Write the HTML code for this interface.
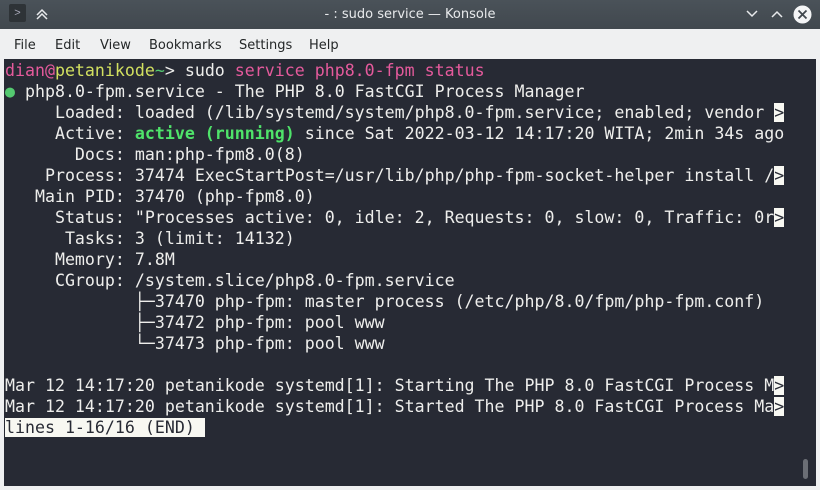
<!DOCTYPE html>
<html><head><meta charset="utf-8"><style>
html,body{margin:0;padding:0;width:820px;height:490px;overflow:hidden;background:#eff0f1;font-family:"Liberation Sans","DejaVu Sans",sans-serif;}
.title{position:absolute;left:0;top:0;width:820px;height:29px;background:linear-gradient(#4a5259,#41484e);color:#e8eaec;}
.title .t{position:absolute;left:0;right:0;top:7px;text-align:center;font-size:13px;font-family:"DejaVu Sans",sans-serif;}
.menu{position:absolute;top:29px;left:0;width:820px;height:30px;font-size:13px;font-family:"DejaVu Sans",sans-serif;color:#232627;}
.menu span{position:absolute;top:9px;}
.term{position:absolute;left:4px;top:59px;width:812px;height:427px;background:#272a34;}
pre{position:absolute;left:5px;top:60px;margin:0;font-family:"DejaVu Sans Mono",monospace;font-size:16.6px;line-height:21px;color:#eeeeec;}
.p{color:#e55a9c}.y{color:#d2e060}.g{color:#4fe36a;font-weight:bold}.gr{color:#54c970}
.r{background:#f8f8f2;color:#272a34}
</style></head><body>
<div class="title">
<div style="position:absolute;left:9px;top:4px;width:17px;height:18px;background:#2e3337;border-radius:2px;color:#aab;font-size:11px;text-align:center;line-height:18px">&gt;</div>
<svg style="position:absolute;left:35px;top:7px" width="14" height="14"><path d="M2 8 L7 3 L12 8 M2 12 L7 7 L12 12" stroke="#e8eaec" stroke-width="1.5" fill="none"/></svg>
<div class="t">- : sudo service — Konsole</div>
<svg style="position:absolute;left:746px;top:9px" width="12" height="10"><path d="M1 2 L6 7 L11 2" stroke="#e8eaec" stroke-width="1.5" fill="none"/></svg>
<svg style="position:absolute;left:771px;top:9px" width="12" height="10"><path d="M1 8 L6 3 L11 8" stroke="#e8eaec" stroke-width="1.5" fill="none"/></svg>
<svg style="position:absolute;left:793px;top:5px" width="19" height="19"><circle cx="9.5" cy="9.5" r="9" fill="#f4f5f6"/><path d="M5.5 5.5 L13.5 13.5 M13.5 5.5 L5.5 13.5" stroke="#41484e" stroke-width="1.8"/></svg>
</div>
<div class="menu"><span style="left:14px">File</span><span style="left:55px">Edit</span><span style="left:100px">View</span><span style="left:149px">Bookmarks</span><span style="left:239px">Settings</span><span style="left:309px">Help</span></div>
<div class="term"></div>
<pre><span class="p">dian@</span><span class="y">petanikode</span><span class="gr">~</span>&gt; sudo <span class="p">service php8.0-fpm status</span>
<span class="gr">●</span> php8.0-fpm.service - The PHP 8.0 FastCGI Process Manager
     Loaded: loaded (/lib/systemd/system/php8.0-fpm.service; enabled; vendor <span class="r">&gt;</span>
     Active: <span class="g">active (running)</span> since Sat 2022-03-12 14:17:20 WITA; 2min 34s ago
       Docs: man:php-fpm8.0(8)
    Process: 37474 ExecStartPost=/usr/lib/php/php-fpm-socket-helper install /<span class="r">&gt;</span>
   Main PID: 37470 (php-fpm8.0)
     Status: "Processes active: 0, idle: 2, Requests: 0, slow: 0, Traffic: 0r<span class="r">&gt;</span>
      Tasks: 3 (limit: 14132)
     Memory: 7.8M
     CGroup: /system.slice/php8.0-fpm.service
             ├─37470 php-fpm: master process (/etc/php/8.0/fpm/php-fpm.conf)
             ├─37472 php-fpm: pool www
             └─37473 php-fpm: pool www

Mar 12 14:17:20 petanikode systemd[1]: Starting The PHP 8.0 FastCGI Process M<span class="r">&gt;</span>
Mar 12 14:17:20 petanikode systemd[1]: Started The PHP 8.0 FastCGI Process Ma<span class="r">&gt;</span>
<span class="r">lines 1-16/16 (END) </span></pre>
<div style="position:absolute;left:803px;top:459px;width:5px;height:20px;background:#6b6e75;border-radius:3px"></div>
</body></html>
